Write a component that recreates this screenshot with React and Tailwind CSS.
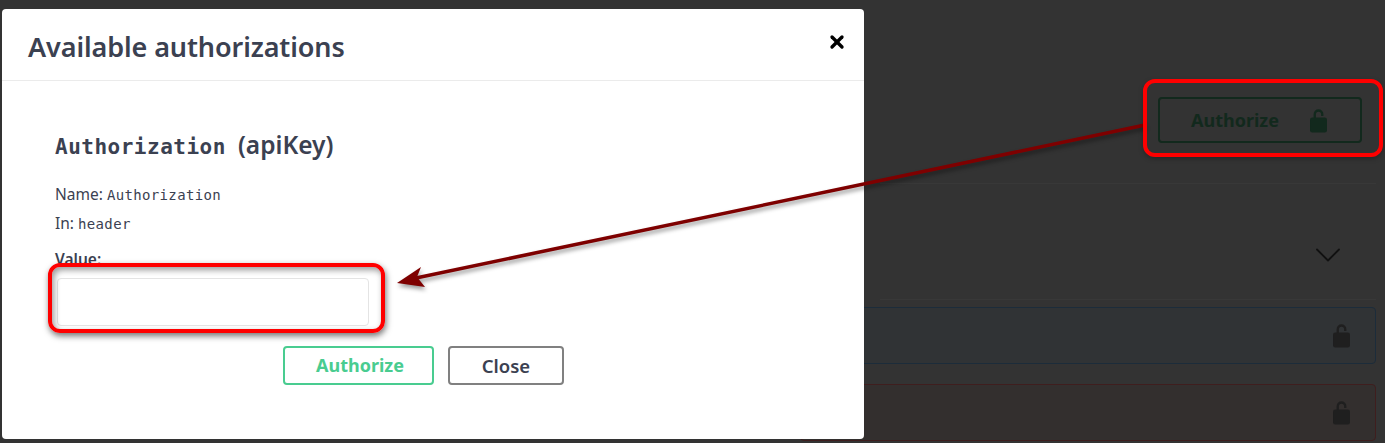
import React from 'react';
import { ChevronDown, X } from 'lucide-react';

const SANS = 'font-["Noto_Sans",sans-serif]';

function LockIcon({ className }) {
  return (
    <svg viewBox="0 0 20 28" className={className} fill="currentColor">
      <path d="M4.5 12V7a5.5 5.5 0 0 1 11 0v2h-2.6V7a2.9 2.9 0 0 0-5.8 0v5z" />
      <rect x="0.5" y="10.5" width="19" height="17" rx="2.5" />
    </svg>
  );
}

function Arrow() {
  return (
    <svg className="absolute inset-0 pointer-events-none drop-shadow-[1px_3px_2px_rgba(0,0,0,0.4)]" width="1385" height="443">
      <path d="M1145 125 L416 278" stroke="#7e0000" strokeWidth="3.5" fill="none" />
      <path d="M397 283 L421 267 L417 277 L425 287 Z" fill="#7e0000" />
    </svg>
  );
}

export default function App() {
  return (
    <div className={`relative w-[1385px] h-[443px] overflow-hidden bg-[#333333] ${SANS}`}>
      {/* dimmed page behind the dialog */}
      <div className="pl-[880px] pr-[9px]">
        <div className="flex justify-end pt-[97px] pr-[14px]">
          <div className="w-[204px] h-[46px] flex items-center border-2 border-[#12291d] rounded-[4px] pl-[31px] text-[#12291d] text-[18px] font-bold">
            <span className="w-[118px]">Authorize</span>
            <LockIcon className="w-[19px] h-[25px]" />
          </div>
        </div>
        <div className="mt-[40px] h-[117px] border-t border-b border-[#383838] flex justify-end pt-[49px] pr-[26px]">
          <ChevronDown className="w-[44px] h-[44px] text-[#111111]" strokeWidth={1} />
        </div>
      </div>

      <div className="pl-[800px] pr-[9px] pt-[7px] flex flex-col gap-[20px]">
        <div className="h-[57px] border border-[#1c2c3a] rounded-[4px] bg-[#303335] flex items-center justify-end pr-[24px]">
          <LockIcon className="w-[19px] h-[25px] text-[#1f1f1f]" />
        </div>
        <div className="h-[57px] border border-[#3f1e1e] rounded-[4px] bg-[#332f2e] flex items-center justify-end pr-[24px]">
          <LockIcon className="w-[19px] h-[25px] text-[#1f1f1f]" />
        </div>
      </div>

      {/* dialog */}
      <div className="absolute left-[2px] top-[9px] w-[862px] h-[430px] bg-white rounded-[4px]">
        <div className="h-[72px] border-b border-[#ebebeb] flex items-start justify-between pl-[26px] pr-[17px]">
          <h3 className="mt-[18px] text-[27px] leading-[40px] font-semibold text-[#3b4151] tracking-[-0.1px]">Available authorizations</h3>
          <X className="mt-[23px] w-[20px] h-[20px] text-black" strokeWidth={4} />
        </div>
        <div className="pl-[53px] pt-[46px] text-[#3b4151]">
          <h4 className="flex items-baseline gap-[12px] h-[36px] leading-[36px] font-semibold">
            <code className='font-["DejaVu_Sans_Mono",monospace] text-[21px] tracking-[0.5px] font-bold'>Authorization</code>
            <span className="text-[24.5px]">(apiKey)</span>
          </h4>
          <p className="mt-[17px] h-[29px] leading-[29px] text-[15.5px]">
            Name: <code className='font-["DejaVu_Sans_Mono",monospace] text-[14px] tracking-[0.35px]'>Authorization</code>
          </p>
          <p className="h-[29px] leading-[29px] text-[15.5px]">
            In: <code className='font-["DejaVu_Sans_Mono",monospace] text-[14px] tracking-[0.35px]'>header</code>
          </p>
          <label className="block h-[17px] leading-[24px] mt-[9px] text-[15.5px] font-semibold">Value:</label>
          <div className="w-[312px] h-[48px] mt-[14px] ml-[2px] border border-[#e4e4e4] rounded-[4px] bg-white" />
        </div>
        <div className="flex gap-[14px] mt-[20px] pl-[281px]">
          <button className="w-[151px] h-[39px] pl-[3px] border-2 border-[#49cc90] rounded-[4px] text-[18px] font-bold text-[#49cc90]">Authorize</button>
          <button className="w-[116px] h-[39px] border-2 border-[#808080] rounded-[4px] text-[18.5px] font-semibold text-[#3b4151]">Close</button>
        </div>
      </div>

      {/* annotation drawn over the screenshot */}
      <Arrow />
      <div className="absolute left-[48px] top-[263px] w-[337px] h-[70px] border-[4px] border-[#ff0000] rounded-[12px] shadow-[1px_3px_6px_rgba(0,0,0,0.55),inset_2px_3px_6px_rgba(0,0,0,0.4)]" />
      <div className="absolute left-[1143px] top-[79px] w-[240px] h-[78px] border-[4px] border-[#ff0000] rounded-[12px] shadow-[0_2px_5px_rgba(0,0,0,0.25)]" />
    </div>
  );
}
